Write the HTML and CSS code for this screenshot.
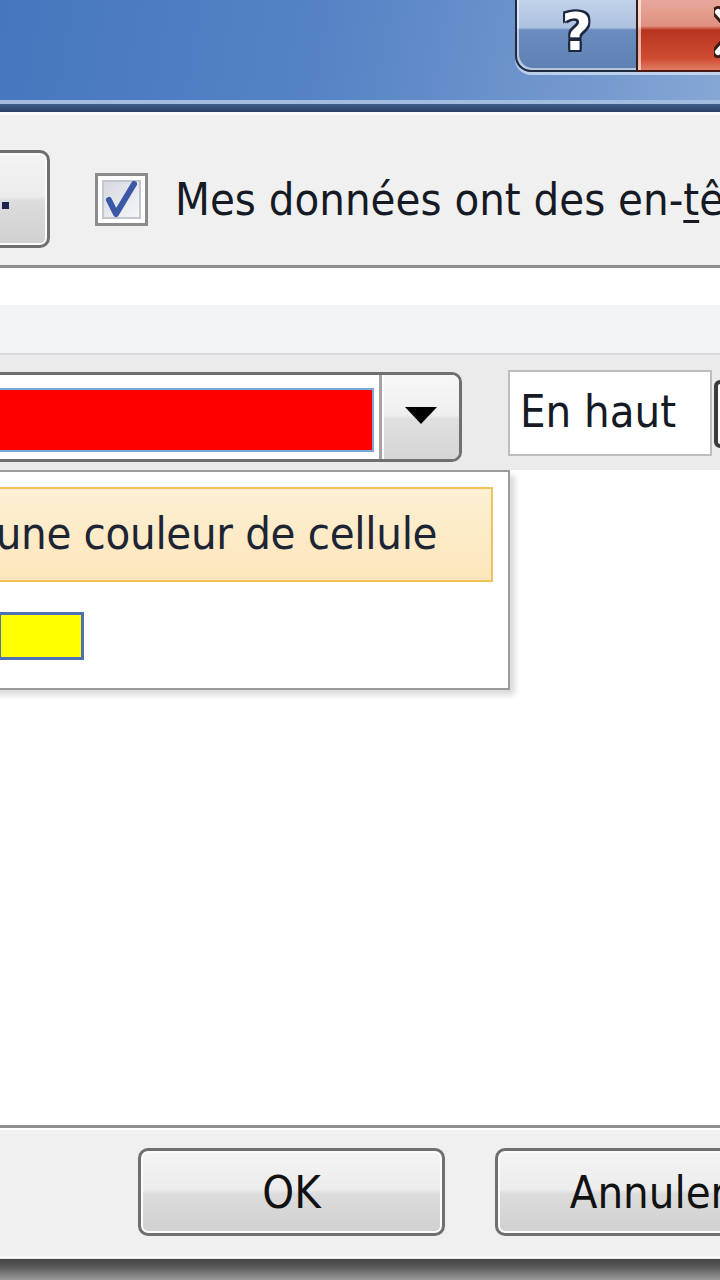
FILE: index.html
```html
<!DOCTYPE html>
<html lang="fr">
<head>
  <meta charset="UTF-8" />
  <title>Trier</title>
  <link rel="stylesheet" href="styles.css">
</head>
<body>
  <div class="dialog">
    <div class="titlebar">
      <div class="caption">
        <span class="help-btn">?</span>
        <span class="close-btn">
          <svg width="40" height="60" viewBox="0 0 40 60">
            <path d="M4 10 L22 30 L4 50" stroke="#3a1a14" stroke-width="12" fill="none" stroke-linecap="round"/>
            <path d="M4 10 L22 30 L4 50" stroke="#fff" stroke-width="6" fill="none" stroke-linecap="round"/>
          </svg>
        </span>
      </div>
    </div>
    <div class="frame-line"></div>

    <div class="toolbar">
      <button class="btn tool-btn" type="button"><span class="dot"></span></button>
      <label class="check-row">
        <span class="checkbox">
          <svg width="53" height="53" viewBox="0 0 53 53">
            <defs>
              <linearGradient id="cb" x1="0" y1="0" x2="1" y2="1">
                <stop offset="0" stop-color="#d4d7de"/>
                <stop offset="1" stop-color="#f6f7f9"/>
              </linearGradient>
            </defs>
            <rect x="1.5" y="1.5" width="50" height="50" fill="#fff" stroke="#8b8b8b" stroke-width="3"/>
            <rect x="8" y="8" width="37" height="37" fill="url(#cb)" stroke="#c2c6cf" stroke-width="2"/>
            <path d="M14 27 L21 41 L39 11" stroke="#3b58a6" stroke-width="6" fill="none" stroke-linecap="round" stroke-linejoin="round"/>
          </svg>
        </span>
        <span>Mes données ont des en-<u>t</u>êtes</span>
      </label>
    </div>

    <div class="levels">
      <div class="levels-head"></div>
      <div class="level-row">
        <div class="color-combo">
          <span class="swatch"></span>
          <span class="drop-btn"><span class="caret"></span></span>
        </div>
        <div class="order-field">En haut</div>
        <div class="stub"></div>

        <!-- open colour list of the combo -->
        <div class="color-menu">
          <div class="menu-item hot">Aucune couleur de cellule</div>
          <div class="chip-row"><span class="chip"></span></div>
        </div>
      </div>
      <div class="levels-body"></div>
    </div>

    <div class="footer">
      <button class="btn" type="button">OK</button>
      <button class="btn" type="button">Annuler</button>
    </div>
    <div class="frame-bottom"></div>
  </div>
</body>
</html>
```

FILE: styles.css
```css
:root {
  --face: #f0f0f0;
  --text: #151a24;
  --btn-border: #6f6f6f;
  --sep: #8e8e8e;
}
html, body {
  margin: 0;
  padding: 0;
}
body {
  width: 720px;
  height: 1280px;
  overflow: hidden;
  background: var(--face);
  color: var(--text);
  font-family: "DejaVu Sans Condensed", "DejaVu Sans", sans-serif;
  font-size: 45px;
}
.dialog {
  display: flex;
  flex-direction: column;
  height: 1280px;
  overflow: hidden;
}

/* window title bar */
.titlebar {
  flex: none;
  height: 100px;
  border-bottom: 4px solid #a3bde0;
  padding-left: 515px;
  background: linear-gradient(100deg, #4676bd 0%, #5583c5 45%, #789bcf 85%, #86a6d5 100%);
}
.caption {
  display: flex;
  margin-top: -10px;
  width: 240px;
}
.help-btn {
  flex: none;
  width: 121px;
  height: 82px;
  box-sizing: border-box;
  border: 2px solid #1e2b42;
  border-top: none;
  border-right: none;
  border-radius: 0 0 0 16px;
  background: linear-gradient(#c9d8ed 0%, #adc2e1 47%, #6b8cbf 50%, #5f80b3 100%);
  box-shadow: inset 2px -2px 0 rgba(255,255,255,0.55), 0 3px 0 rgba(214,227,245,0.75);
  color: #fff;
  font: bold 52px "DejaVu Sans", sans-serif;
  text-align: center;
  line-height: 84px;
  text-shadow: -2px 0 #1c2840, 2px 0 #1c2840, 0 -2px #1c2840, 0 2px #1c2840,
    -2px -2px #1c2840, 2px 2px #1c2840, -2px 2px #1c2840, 2px -2px #1c2840;
}
.close-btn {
  flex: none;
  width: 110px;
  height: 82px;
  box-sizing: border-box;
  border-left: 2px solid #3a1a14;
  border-bottom: 2px solid #4a1a12;
  padding: 12px 0 0 76px;
  background: linear-gradient(#eab1a5 0%, #e0907f 45%, #b9341f 50%, #cf4a33 85%, #e27a63 100%);
  box-shadow: inset 3px 0 0 rgba(255,255,255,0.6), 0 3px 0 rgba(214,227,245,0.75);
}
.frame-line {
  flex: none;
  height: 8px;
  background: linear-gradient(#3f5c89, #2a4168);
}

/* options strip */
.toolbar {
  flex: none;
  height: 153px;
  box-sizing: border-box;
  border-top: 3px solid #fafafa;
  padding-top: 35px;
  background: var(--face);
  display: flex;
  align-items: flex-start;
}
.btn {
  flex: none;
  width: 307px;
  height: 88px;
  box-sizing: border-box;
  padding: 0;
  border: 3px solid var(--btn-border);
  border-radius: 10px;
  background: linear-gradient(#f4f4f4 0%, #ececec 47%, #dcdcdc 52%, #d0d0d0 100%);
  box-shadow: inset 0 0 0 2px #fbfbfb;
  color: #111;
  font: inherit;
}
.tool-btn {
  width: 60px;
  height: 98px;
  margin-left: -10px;
  display: flex;
  align-items: center;
  padding-left: 9px;
}
.dot {
  width: 7px;
  height: 7px;
  margin-top: 12px;
  background: #1b2450;
}
.check-row {
  display: flex;
  align-items: center;
  gap: 27px;
  height: 98px;
  margin-left: 45px;
  white-space: nowrap;
}
.checkbox svg {
  display: block;
}
.check-row u {
  text-decoration-thickness: 3px;
  text-underline-offset: 5px;
}

/* sort levels */
.levels {
  flex: 1;
  display: flex;
  flex-direction: column;
  border-top: 3px solid var(--sep);
}
.levels-head {
  flex: none;
  height: 85px;
  background: linear-gradient(#fff 0, #fff 37px, #f3f4f6 37px);
  border-bottom: 2px solid #d9dadd;
}
.level-row {
  flex: none;
  position: relative;
  height: 115px;
  box-sizing: border-box;
  padding-top: 17px;
  background: #ebebeb;
  display: flex;
  align-items: flex-start;
}
.color-combo {
  flex: none;
  width: 474px;
  height: 90px;
  margin-left: -12px;
  box-sizing: border-box;
  border: 3px solid var(--btn-border);
  border-radius: 10px;
  background: #fff;
  display: flex;
  overflow: hidden;
}
.swatch {
  flex: 1;
  margin: 13px 5px 7px 0;
  border: 2px solid #7ba8d6;
  background: #ff0000;
}
.drop-btn {
  flex: none;
  width: 80px;
  box-sizing: border-box;
  border-left: 3px solid #a4a4a4;
  box-shadow: inset 2px 0 0 #fff;
  background: linear-gradient(#f7f7f7, #efefef 48%, #e0e0e0 52%, #d5d5d5);
  display: flex;
  align-items: center;
  justify-content: center;
}
.caret {
  width: 0;
  height: 0;
  border-left: 16px solid transparent;
  border-right: 16px solid transparent;
  border-top: 17px solid #000;
  margin-top: -4px;
}
.order-field {
  flex: none;
  width: 204px;
  height: 86px;
  margin: -2px 0 0 46px;
  box-sizing: border-box;
  border: 2px solid #bdbdbd;
  background: #fff;
  padding-left: 10px;
  line-height: 80px;
  white-space: nowrap;
}
.stub {
  flex: none;
  width: 40px;
  height: 68px;
  margin: 8px 0 0 2px;
  box-sizing: border-box;
  border: 4px solid #3b3b3b;
  border-radius: 6px;
  background: #fff;
}
.color-menu {
  position: absolute;
  top: 115px;
  left: -100px;
  width: 610px;
  height: 220px;
  box-sizing: border-box;
  border: 2px solid #9b9b9b;
  padding-top: 15px;
  background: #fff;
  box-shadow: 5px 5px 6px rgba(0,0,0,0.15);
  z-index: 2;
}
.menu-item.hot {
  height: 95px;
  margin: 0 15px;
  box-sizing: border-box;
  border: 2px solid #f1c25a;
  background: linear-gradient(#fdf0d4, #fde6bb);
  padding-left: 2px;
  line-height: 89px;
  color: #1d2433;
  white-space: nowrap;
  letter-spacing: -0.3px;
}
.chip-row {
  margin-top: 30px;
  padding-left: 96px;
}
.chip {
  display: block;
  width: 86px;
  height: 48px;
  box-sizing: border-box;
  border: 3px solid #4c70b3;
  background: #ffff00;
}
.levels-body {
  flex: 1;
  background: #fff;
}

/* buttons at the bottom */
.footer {
  flex: none;
  height: 131px;
  box-sizing: border-box;
  border-top: 3px solid var(--sep);
  box-shadow: inset 0 2px 0 #fff;
  padding: 20px 0 0 138px;
  background: var(--face);
  display: flex;
  gap: 50px;
  align-items: flex-start;
}
.frame-bottom {
  flex: none;
  height: 24px;
  background: linear-gradient(#fafafa 0, #fafafa 2px, #e6e6e6 2px, #e6e6e6 3px, #454545 3px, #585858 45%, #9a9a9a 100%);
}
```
